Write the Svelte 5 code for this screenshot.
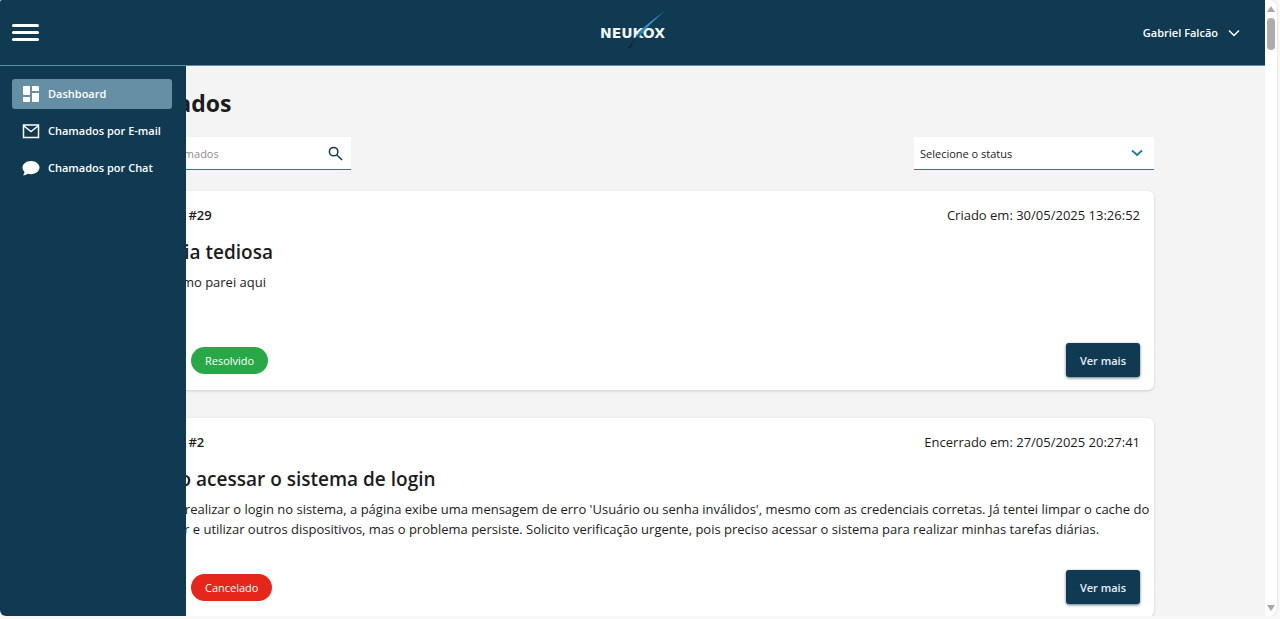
<script lang="ts">
  let menuOpen = $state(true);
  let search = $state('');
  let status = $state('');

  const tickets = [
    {
      id: 29,
      date: 'Criado em: 30/05/2025 13:26:52',
      title: 'Correria tediosa',
      text: 'Hoje mesmo parei aqui',
      status: 'Resolvido',
      kind: 'resolved'
    },
    {
      id: 2,
      date: 'Encerrado em: 27/05/2025 20:27:41',
      title: 'Erro ao acessar o sistema de login',
      text: "Ao tentar realizar o login no sistema, a página exibe uma mensagem de erro 'Usuário ou senha inválidos', mesmo com as credenciais corretas. Já tentei limpar o cache do navegador e utilizar outros dispositivos, mas o problema persiste. Solicito verificação urgente, pois preciso acessar o sistema para realizar minhas tarefas diárias.",
      status: 'Cancelado',
      kind: 'cancelled'
    }
  ];
</script>

<div class="window">
  <div class="screen">
    <header>
      <button class="burger" aria-label="Menu" aria-expanded={menuOpen} onclick={() => (menuOpen = !menuOpen)}>
        <span></span><span></span><span></span>
      </button>
      <a class="logo" href="#inicio">
        <span>NEUKOX</span>
        <svg class="streak" viewBox="0 0 40 38" aria-hidden="true">
          <defs>
            <linearGradient id="beam" gradientUnits="userSpaceOnUse" x1="39" y1="1" x2="1" y2="37">
              <stop offset="0" stop-color="#2b6f92" />
              <stop offset=".3" stop-color="#2f9bd0" />
              <stop offset=".6" stop-color="#2484b5" />
              <stop offset=".75" stop-color="#0f3a51" />
              <stop offset="1" stop-color="#081d2b" />
            </linearGradient>
          </defs>
          <path d="M39 0C29 7 21 13 15 19C10 25 5 32 2 37C4 38 5 36 7 33C11 28 15 24 19 19C25 12 32 6 39 0Z" fill="url(#beam)" />
        </svg>
      </a>
      <button class="user">
        Gabriel Falcão
        <svg viewBox="0 0 12 8" aria-hidden="true"><path d="M1 1.5L6 6.5L11 1.5" /></svg>
      </button>
    </header>

    <div class="body">
      {#if menuOpen}
        <nav>
          <a class="active" href="#dashboard">
            <svg viewBox="0 0 18 18" aria-hidden="true">
              <path d="M2 1h6v9H2q-1 0-1-1V2q0-1 1-1zM10 1h6q1 0 1 1v4h-7zM10 8h7v8q0 1-1 1h-6zM1 12h7v5H2q-1 0-1-1z" />
            </svg>
            Dashboard
          </a>
          <a href="#email">
            <svg viewBox="0 0 18 18" aria-hidden="true">
              <path class="line" d="M1.5 3h15v12.500h-15zM2 4l7 5.500L16 4" />
            </svg>
            Chamados por E-mail
          </a>
          <a href="#chat">
            <svg viewBox="0 0 18 18" aria-hidden="true">
              <path d="M9 2C4.300 2 .5 4.900 .5 8.600c0 1.700.8 3.200 2 4.300-.2 1.400-.9 2.500-1.700 3.400 1.900 0 3.600-.7 4.800-1.600 1 .3 2.200.5 3.400.5 4.700 0 8.500-2.900 8.500-6.600S13.700 2 9 2z" />
            </svg>
            Chamados por Chat
          </a>
        </nav>
      {/if}

      <main>
        <h1>Chamados</h1>
        <div class="filters">
          <label class="search">
            <input type="text" placeholder="Procurar chamados" aria-label="Procurar chamados" bind:value={search} />
            <svg viewBox="0 0 16 16" aria-hidden="true"><circle cx="6" cy="6" r="4.500" /><path d="M9.500 9.500L15 15" /></svg>
          </label>
          <div class="status">
            <select aria-label="Selecione o status" bind:value={status}>
              <option value="">Selecione o status</option>
            </select>
            <svg viewBox="0 0 12 8" aria-hidden="true"><path d="M1 1.500L6 6L11 1.500" /></svg>
          </div>
        </div>

        <section class="list">
          {#each tickets as t (t.id)}
            <article>
              <div class="meta">
                <span class="id">Chamado #{t.id}</span>
                <time>{t.date}</time>
              </div>
              <h2>{t.title}</h2>
              <p>{t.text}</p>
              <div class="foot">
                <span class="badge {t.kind}">{t.status}</span>
                <button class="more">Ver mais</button>
              </div>
            </article>
          {/each}
        </section>
      </main>
    </div>
  </div>

  <div class="scrollbar" aria-hidden="true">
    <svg viewBox="0 0 8 6"><path d="M4 0L8 6H0z" /></svg>
    <div class="thumb"></div>
    <svg class="down" viewBox="0 0 8 6"><path d="M0 0H8L4 6z" /></svg>
  </div>
</div>

<style>
  :global(body) {
    margin: 0;
    background: #f8f8f8;
    font-family: 'Open Sans', 'Noto Sans', sans-serif;
    color: #1b1c20;
  }
  * { box-sizing: border-box; }
  button, input, select { font: inherit; color: inherit; border: 0; margin: 0; }
  button { cursor: pointer; }
  a { text-decoration: none; }

  .window {
    height: calc(100vh - 3px);
    margin-right: 3px;
    display: flex;
    overflow: hidden;
    background: #fff;
    border-radius: 2px 8px 8px 6px;
    box-shadow: 0 0 2px #c4c4c4;
  }
  .screen {
    flex: 1;
    min-width: 0;
    display: flex;
    flex-direction: column;
    background: #f4f4f4;
  }

  header {
    flex: none;
    height: 66px;
    padding: 0 12px;
    display: grid;
    grid-template-columns: 1fr auto 1fr;
    align-items: center;
    background: #0f3a51;
    border-bottom: 1px solid #5f8da3;
    color: #fff;
  }
  .burger {
    width: 27px;
    padding: 0;
    display: grid;
    gap: 4px;
    background: none;
  }
  .burger span { height: 3px; border-radius: 2px; background: #fff; }
  .logo {
    position: relative;
    color: #f2f7fa;
    font-family: 'DejaVu Sans', sans-serif;
    font-size: 14px;
    font-weight: 700;
    line-height: 20px;
  }
  .streak { position: absolute; left: 26px; top: -12px; width: 40px; height: 38px; }
  .user {
    justify-self: end;
    display: flex;
    align-items: center;
    gap: 10px;
    margin-right: 13px;
    padding: 0;
    background: none;
    font-size: 11px;
    line-height: 14px;
    font-weight: 600;
  }
  .user svg { width: 12px; height: 8px; fill: none; stroke: #fff; stroke-width: 1.500; }

  .body { position: relative; flex: 1; min-height: 0; overflow: hidden; }
  nav {
    position: absolute;
    inset: 0 auto 0 0;
    z-index: 1;
    width: 186px;
    padding: 13px 14px 0 12px;
    display: flex;
    flex-direction: column;
    gap: 7px;
    background: #0f3a51;
  }
  nav a {
    height: 30px;
    padding: 0 0 0 10px;
    display: flex;
    align-items: center;
    gap: 8px;
    border-radius: 3px;
    color: #fff;
    font-size: 11px;
    line-height: 14px;
    font-weight: 600;
    white-space: nowrap;
  }
  nav a.active { background: #648fa4; }
  nav svg { width: 18px; height: 18px; flex: none; fill: #fff; }
  nav .line { fill: none; stroke: #fff; stroke-width: 1.500; }

  main { padding: 20px 111px; }
  h1 { margin: 0; font-size: 23px; line-height: 34px; font-weight: 700; }
  .filters { margin-top: 17px; display: flex; justify-content: space-between; }
  .search, .status {
    height: 33px;
    width: 240px;
    display: flex;
    align-items: center;
    position: relative;
    background: #fff;
    border-bottom: 1px solid #1f7fa3;
    font-size: 11px;
  }
  .search { padding: 0 8px 0 7px; }
  .search input { flex: 1; min-width: 0; padding: 0; outline: 0; background: none; }
  .search input::placeholder { color: #8d8d8d; }
  .search svg { width: 15px; height: 15px; fill: none; stroke: #0f3a51; stroke-width: 1.600; }
  .status select { width: 100%; height: 32px; padding: 0 30px 0 6px; appearance: none; background: none; outline: 0; }
  .status svg { position: absolute; right: 11px; width: 12px; height: 8px; fill: none; stroke: #20799b; stroke-width: 1.800; pointer-events: none; }

  .list { margin-top: 21px; display: grid; gap: 28px; }
  article {
    padding: 14px 14px 13px;
    background: #fff;
    border-radius: 6px;
    box-shadow: 0 1px 3px rgba(0, 0, 0, 0.16);
  }
  .meta { display: flex; justify-content: space-between; font-size: 13px; line-height: 20px; }
  .id { font-weight: 600; }
  h2 { margin: 13px 0 6px; font-size: 19px; line-height: 28px; font-weight: 600; }
  p { margin: 0 -12px 0 0; min-height: 40px; font-size: 13px; line-height: 20px; }
  .foot {
    margin-top: 31px;
    padding-left: 66px;
    display: flex;
    align-items: center;
    justify-content: space-between;
  }
  .badge {
    height: 27px;
    padding: 0 14px;
    border-radius: 14px;
    color: #fff;
    font-size: 11px;
    line-height: 27px;
  }
  .resolved { background: #29a847; }
  .cancelled { background: #e7261b; }
  .more {
    height: 34px;
    padding: 0 14px;
    border-radius: 3px;
    background: #0f3a51;
    color: #e6f0fa;
    font-size: 11px;
    font-weight: 600;
    box-shadow: 0 1px 3px rgba(15, 58, 81, 0.7);
  }

  .scrollbar {
    flex: none;
    width: 12px;
    padding: 6px 2px 5px;
    display: flex;
    flex-direction: column;
    align-items: center;
    gap: 6px;
    background: #fff;
  }
  .scrollbar svg { width: 8px; height: 6px; fill: #a8a8a8; }
  .thumb { width: 8px; height: 32px; border-radius: 4px; background: #adadad; }
  .down { margin-top: auto; }
</style>
